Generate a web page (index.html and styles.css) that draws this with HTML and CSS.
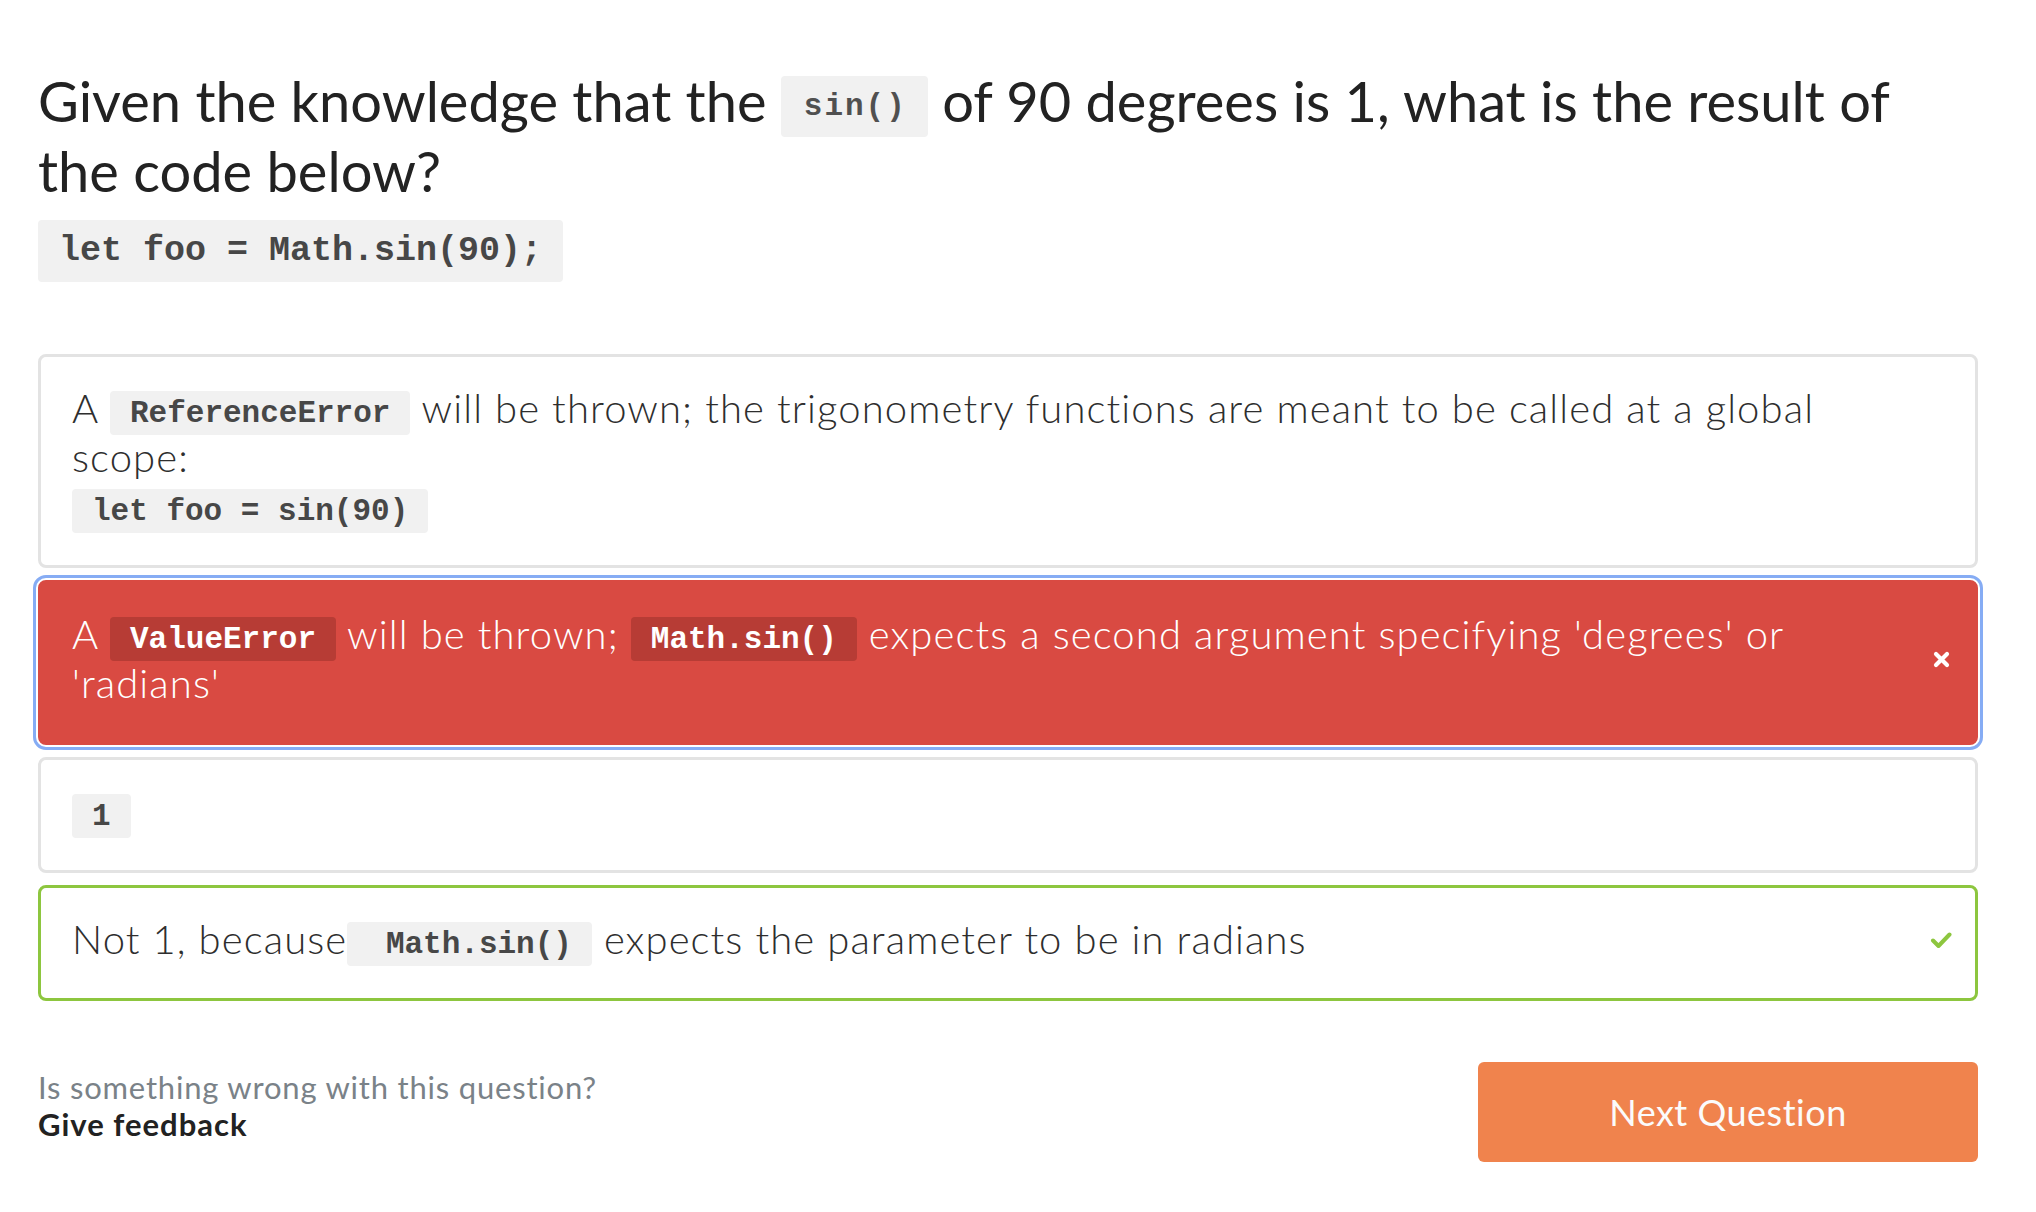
FILE: index.html
```html
<!DOCTYPE html>
<html lang="en">
<head>
<meta charset="utf-8">
<title>Quiz question</title>
<link rel="stylesheet" href="styles.css">
</head>
<body>
<main class="page">
  <h1 class="question">Given the knowledge that the <code class="code-inline code-title">sin()</code> of 90 degrees is 1, what is the result of the code below?</h1>
  <pre class="code-block">let foo = Math.sin(90);</pre>

  <ul class="answers">
    <li class="answer">
      <div class="answer-text">A <code class="code-inline">ReferenceError</code> will be thrown; the trigonometry functions are meant to be called at a global scope:<br><code class="code-inline">let foo = sin(90)</code></div>
    </li>
    <li class="answer answer-wrong">
      <div class="answer-text">A <code class="code-inline">ValueError</code> will be thrown; <code class="code-inline">Math.sin()</code> expects a second argument specifying 'degrees' or 'radians'</div>
      <span class="answer-icon"><svg class="icon-x" viewBox="0 0 17 17" width="17" height="17" aria-hidden="true"><path d="M3 3 L14 14 M14 3 L3 14" fill="none" stroke="#ffffff" stroke-width="4.2" stroke-linecap="round"/></svg></span>
    </li>
    <li class="answer">
      <div class="answer-text"><code class="code-inline">1</code></div>
    </li>
    <li class="answer answer-right">
      <div class="answer-text">Not 1, because<code class="code-inline"> Math.sin()</code> expects the parameter to be in radians</div>
      <span class="answer-icon"><svg class="icon-check" viewBox="0 0 22 18" width="22" height="18" aria-hidden="true"><path d="M3 9.5 L8.5 15 L19.5 3.5" fill="none" stroke="#8dc63f" stroke-width="4" stroke-linecap="round" stroke-linejoin="round"/></svg></span>
    </li>
  </ul>

  <footer class="footer">
    <div class="feedback">
      <p class="feedback-q">Is something wrong with this question?</p>
      <a class="feedback-link" href="#">Give feedback</a>
    </div>
    <button class="next-btn" type="button">Next Question</button>
  </footer>
</main>
</body>
</html>
```

FILE: styles.css
```css
* {
  box-sizing: border-box;
}

html,
body {
  margin: 0;
  background: #ffffff;
}

body {
  font-family: Lato, "Open Sans", sans-serif;
  color: #222222;
}

.page {
  padding: 0 58px 40px 38px;
}

.question {
  margin: 66px 0 14px;
  font-size: 56px;
  font-weight: 400;
  line-height: 70px;
  color: #222222;
}

code,
pre {
  font-family: "Liberation Mono", "Courier New", monospace;
}

.code-inline {
  font-size: 31px;
  font-weight: 700;
  line-height: 1;
  letter-spacing: 0;
  color: #474747;
  background: #f1f1f1;
  border-radius: 4px;
  padding: 4.5px 20px;
  vertical-align: 2px;
  white-space: pre;
}

.code-title {
  padding: 13px 21px 13px 23px;
  letter-spacing: 2px;
  vertical-align: 7px;
  color: #505050;
}

.code-block {
  display: block;
  width: max-content;
  margin: 0;
  font-size: 35px;
  font-weight: 700;
  line-height: 40px;
  padding: 11px 21px;
  color: #474747;
  background: #f1f1f1;
  border-radius: 4px;
}

.answers {
  list-style: none;
  margin: 72px 0 0;
  padding: 0;
  display: flex;
  flex-direction: column;
  gap: 12px;
}

.answer {
  display: flex;
  align-items: center;
  border: 3px solid #e3e3e3;
  border-radius: 8px;
  padding: 27px 23px 34px 31px;
  font-size: 40px;
  font-weight: 300;
  line-height: 49px;
  letter-spacing: 1.1px;
  color: #2e2e2e;
}

.answer-text {
  flex: 1;
  padding-right: 60px;
}

.answer-icon {
  flex: none;
  width: 22px;
  display: flex;
  justify-content: center;
  align-items: center;
}

.answer-wrong {
  background: #d94a42;
  border-color: #d94a42;
  color: #ffffff;
  outline: 3px solid #86acf4;
  outline-offset: 2px;
}

.answer-wrong .code-inline {
  background: #b73c35;
  color: #ffffff;
}

.answer-right {
  border-color: #8dc63f;
}

.footer {
  display: flex;
  justify-content: space-between;
  align-items: center;
  margin-top: 61px;
}

.feedback {
  padding-bottom: 12px;
  font-size: 31px;
  line-height: 37px;
  letter-spacing: 0.8px;
}

.feedback-q {
  margin: 0;
  color: #7a8288;
  font-weight: 400;
}

.feedback-link {
  display: block;
  color: #222222;
  font-weight: 700;
  letter-spacing: 1px;
  text-decoration: none;
}

.next-btn {
  width: 500px;
  height: 100px;
  border: 0;
  border-radius: 6px;
  background: #f0834d;
  color: #fbfbfb;
  font-family: inherit;
  font-size: 36px;
  font-weight: 400;
  letter-spacing: 0.5px;
  cursor: pointer;
}
```
